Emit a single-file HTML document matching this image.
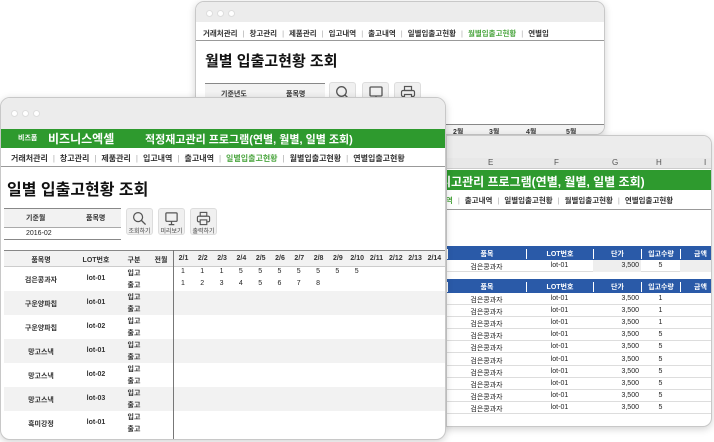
<!DOCTYPE html>
<html><head><meta charset="utf-8"><style>
*{margin:0;padding:0;box-sizing:border-box}
body{width:714px;height:442px;background:#fff;position:relative;overflow:hidden;font-family:"Liberation Sans","Noto Sans CJK KR",sans-serif;color:#222}
.a{position:absolute}
.win{position:absolute;background:#fff;border:1px solid #c8c8c8;border-radius:9px;overflow:hidden;box-shadow:0 2px 8px rgba(0,0,0,.18)}
.bar{position:absolute;left:0;right:0;top:0;background:#ececec}
.dots{position:absolute;left:10px;display:flex;gap:4px}
.dots i{width:7px;height:7px;border-radius:50%;background:#fff;border:1px solid #ddd;display:block}
.nav{position:absolute;white-space:nowrap;font-size:8px;font-weight:bold;color:#333}
.nav span{margin:0 5px}
.nav b{font-weight:normal;color:#aaa}
.g{color:#4ca640}
.btn{position:absolute;width:27px;height:27px;background:#f0f0f0;border:1px solid #ddd;border-radius:3px;font-size:6px;text-align:center;color:#444}
.btn svg{display:block;margin:2px auto 0}
.t{position:absolute;font-size:7px;text-align:center;font-weight:bold;color:#333}
.c{position:absolute;font-size:7px;text-align:center}
</style></head><body>
<svg width="0" height="0" style="position:absolute">
<symbol id="mag" viewBox="0 0 16 16"><circle cx="6.5" cy="6.5" r="4.8" fill="none" stroke="#555" stroke-width="1.3"/><path d="M10 10l4.5 4.5" stroke="#555" stroke-width="1.4"/></symbol>
<symbol id="mon" viewBox="0 0 16 16"><rect x="2" y="2" width="12" height="9" rx="1" fill="none" stroke="#555" stroke-width="1.3"/><path d="M8 11v3M5 14.5h6" stroke="#555" stroke-width="1.3"/></symbol>
<symbol id="prn" viewBox="0 0 16 16"><rect x="4.5" y="1.5" width="7" height="4" fill="none" stroke="#555" stroke-width="1.2"/><rect x="1.5" y="5.5" width="13" height="6" rx="1.5" fill="none" stroke="#555" stroke-width="1.2"/><rect x="4.5" y="9.5" width="7" height="5" fill="#f0f0f0" stroke="#555" stroke-width="1.2"/></symbol>
</svg>

<!-- back window -->
<div class="win" style="left:195px;top:1px;width:410px;height:134px">
 <div class="bar" style="height:20px"><div class="dots" style="top:8px"><i></i><i></i><i></i></div></div>
 <div class="nav" style="left:2px;top:26px;font-size:7.5px"><span>거래처관리</span><b>|</b><span>창고관리</span><b>|</b><span>제품관리</span><b>|</b><span>입고내역</span><b>|</b><span>출고내역</span><b>|</b><span>일별입출고현황</span><b>|</b><span class="g">월별입출고현황</span><b>|</b><span>연별입</span></div>
 <div class="a" style="left:0;right:0;top:38px;border-top:1px solid #999"></div>
 <div class="a" style="left:9px;top:48px;font-size:15px;font-weight:bold;color:#111">월별 입출고현황 조회</div>
 <div class="a" style="left:9px;top:81px;width:120px;height:20px;background:#f2f2f2;border-top:1px solid #888"></div>
 <div class="t" style="left:25px;top:87px">기준년도</div><div class="t" style="left:90px;top:87px">품목명</div>
 <div class="btn" style="left:133px;top:80px"><svg width="16" height="16"><use href="#mag"/></svg></div>
 <div class="btn" style="left:166px;top:80px"><svg width="16" height="16"><use href="#mon"/></svg></div>
 <div class="btn" style="left:198px;top:80px"><svg width="16" height="16"><use href="#prn"/></svg></div>
 <div class="a" style="left:0;right:0;top:122px;height:12px;background:#f2f2f2;border-top:1px solid #888"></div>
 <div class="t" style="left:257px;top:125px">2월</div><div class="t" style="left:293px;top:125px">3월</div><div class="t" style="left:330px;top:125px">4월</div><div class="t" style="left:370px;top:125px">5월</div>
</div>

<!-- right window -->
<div class="win" style="left:437px;top:135px;width:275px;height:292px">
 <div class="bar" style="height:22px"></div>
 <div class="a" style="left:0;right:0;top:22px;height:11px;background:#e8e8e8;border-bottom:1px solid #ccc;font-size:8px;color:#555">
  <span class="a" style="left:50px">E</span><span class="a" style="left:116px">F</span><span class="a" style="left:174px">G</span><span class="a" style="left:218px">H</span><span class="a" style="left:266px">I</span></div>
 <div class="a" style="left:0;right:0;top:34px;height:20px;background:#2e9a2e;color:#fff;font-size:12px;font-weight:bold;padding:3px 0 0 2px">니고관리 프로그램(연별, 월별, 일별 조회)</div>
 <div class="nav" style="left:-4px;top:59px;font-size:7.5px"><span class="g">내역</span><b>|</b><span>출고내역</span><b>|</b><span>일별입출고현황</span><b>|</b><span>월별입출고현황</span><b>|</b><span>연별입출고현황</span></div>
 <div class="a" style="left:0;right:0;top:73px;border-top:1px solid #999"></div>
 <div class="a" style="left:0;top:0;width:9px;height:292px;background:#e8e8e8;border-right:1px solid #ccc"></div>
 <div id="rt" class="a" style="left:9px;top:110px;width:270px"></div>
</div>

<!-- front window -->
<div class="win" style="left:0;top:97px;width:446px;height:343px;border-radius:10px">
 <div class="bar" style="height:31px"><div class="dots" style="top:12px"><i></i><i></i><i></i></div></div>
 <div class="a" style="left:0;right:0;top:31px;height:19px;background:#2e9a2e;color:#fff;font-weight:bold">
  <span class="a" style="left:17px;top:4px;font-size:7px">비즈폼</span>
  <span class="a" style="left:47px;top:1px;font-size:12px">비즈니스엑셀</span>
  <span class="a" style="left:144px;top:2px;font-size:11px">적정재고관리 프로그램(연별, 월별, 일별 조회)</span></div>
 <div class="nav" style="left:5px;top:55px;font-size:8px"><span>거래처관리</span><b>|</b><span>창고관리</span><b>|</b><span>제품관리</span><b>|</b><span>입고내역</span><b>|</b><span>출고내역</span><b>|</b><span class="g">일별입출고현황</span><b>|</b><span>월별입출고현황</span><b>|</b><span>연별입출고현황</span></div>
 <div class="a" style="left:0;right:0;top:68px;border-top:1px solid #999"></div>
 <div class="a" style="left:6px;top:78px;font-size:16px;font-weight:bold;color:#111">일별 입출고현황 조회</div>
 <div class="a" style="left:3px;top:110px;width:117px;height:20px;background:#f2f2f2;border-top:1px solid #888;border-bottom:1px solid #aaa"></div>
 <div class="t" style="left:25px;top:115px">기준월</div><div class="t" style="left:85px;top:115px">품목명</div>
 <div class="a" style="left:3px;top:130px;width:117px;height:12px;border-bottom:1px solid #888;font-size:7px;padding:2px 0 0 22px">2016-02</div>
 <div class="btn" style="left:125px;top:110px"><svg width="15" height="15"><use href="#mag"/></svg>조회하기</div>
 <div class="btn" style="left:157px;top:110px"><svg width="15" height="15"><use href="#mon"/></svg>미리보기</div>
 <div class="btn" style="left:189px;top:110px"><svg width="15" height="15"><use href="#prn"/></svg>출력하기</div>
 <div class="a" style="left:3px;top:152px;width:443px;height:17px;background:#f2f2f2;border-top:1px solid #888;border-bottom:1px solid #ccc"></div>
 <div id="ft"></div>
 <div class="a" style="left:172px;top:152px;height:191px;border-left:1px solid #777"></div>
</div>

<script>
var f=document.getElementById('ft'),h='';
var hd=[['품목명',40],['LOT번호',95],['구분',133],['전월',160]];
hd.forEach(function(x){h+='<div class="t" style="left:'+(x[1]-20)+'px;width:40px;top:157px">'+x[0]+'</div>'});
for(var i=1;i<=14;i++)h+='<div class="t" style="left:'+(173+(i-1)*19.3)+'px;width:19px;top:157px">2/'+i+'</div>';
var it=[['검은콩과자','lot-01'],['구운양파칩','lot-01'],['구운양파칩','lot-02'],['망고스낵','lot-01'],['망고스낵','lot-02'],['망고스낵','lot-03'],['흑미강정','lot-01']];
var r1=[1,1,1,5,5,5,5,5,5,5],r2=[1,2,3,4,5,6,7,8];
it.forEach(function(x,k){var y=169+k*24;
 if(k%2==1)h+='<div class="a" style="left:3px;top:'+y+'px;width:443px;height:24px;background:#f2f2f2"></div>';
 h+='<div class="t" style="left:10px;width:60px;top:'+(y+8)+'px">'+x[0]+'</div><div class="t" style="left:75px;width:40px;top:'+(y+8)+'px">'+x[1]+'</div>';
 h+='<div class="t" style="left:123px;width:20px;top:'+(y+1)+'px">입고</div><div class="t" style="left:123px;width:20px;top:'+(y+13)+'px">출고</div>';
 if(k==0){r1.forEach(function(v,j){h+='<div class="c" style="left:'+(173+j*19.3)+'px;width:19px;top:'+(y+1)+'px;text-align:left;padding-left:7px">'+v+'</div>'});
 r2.forEach(function(v,j){h+='<div class="c" style="left:'+(173+j*19.3)+'px;width:19px;top:'+(y+13)+'px;text-align:left;padding-left:7px">'+v+'</div>'});}
});
f.innerHTML=h;
var r=document.getElementById('rt'),s='';
var cols=[[0,79],[79,67],[146,48],[194,39],[233,40]];
function hdr(y){s+='<div class="a" style="left:0;top:'+y+'px;width:270px;height:14px;background:#2a5aa8"></div>';
 ['품목','LOT번호','단가','입고수량','금액'].forEach(function(t,i){s+='<div class="t" style="color:#fff;left:'+cols[i][0]+'px;width:'+cols[i][1]+'px;top:'+(y+3)+'px;border-left:1px solid #fff">'+t+'</div>'})}
function row(y,q,g){s+='<div class="a" style="left:0;top:'+y+'px;width:270px;height:12px;border-bottom:1px solid #ddd"></div>';
 if(g)s+='<div class="a" style="left:146px;top:'+y+'px;width:48px;height:12px;background:#eee"></div><div class="a" style="left:233px;top:'+y+'px;width:40px;height:12px;background:#eee"></div>';
 s+='<div class="c" style="left:0;width:79px;top:'+(y+2)+'px">검은콩과자</div><div class="c" style="left:79px;width:67px;top:'+(y+2)+'px">lot-01</div><div class="c" style="left:146px;width:46px;top:'+(y+2)+'px;text-align:right">3,500</div><div class="c" style="left:194px;width:39px;top:'+(y+2)+'px">'+q+'</div>';}
hdr(0);row(14,5,1);hdr(33);
[1,1,1,5,5,5,5,5,5,5].forEach(function(q,i){row(47+i*12.1,q)});
r.innerHTML=s;
</script>
</body></html>
